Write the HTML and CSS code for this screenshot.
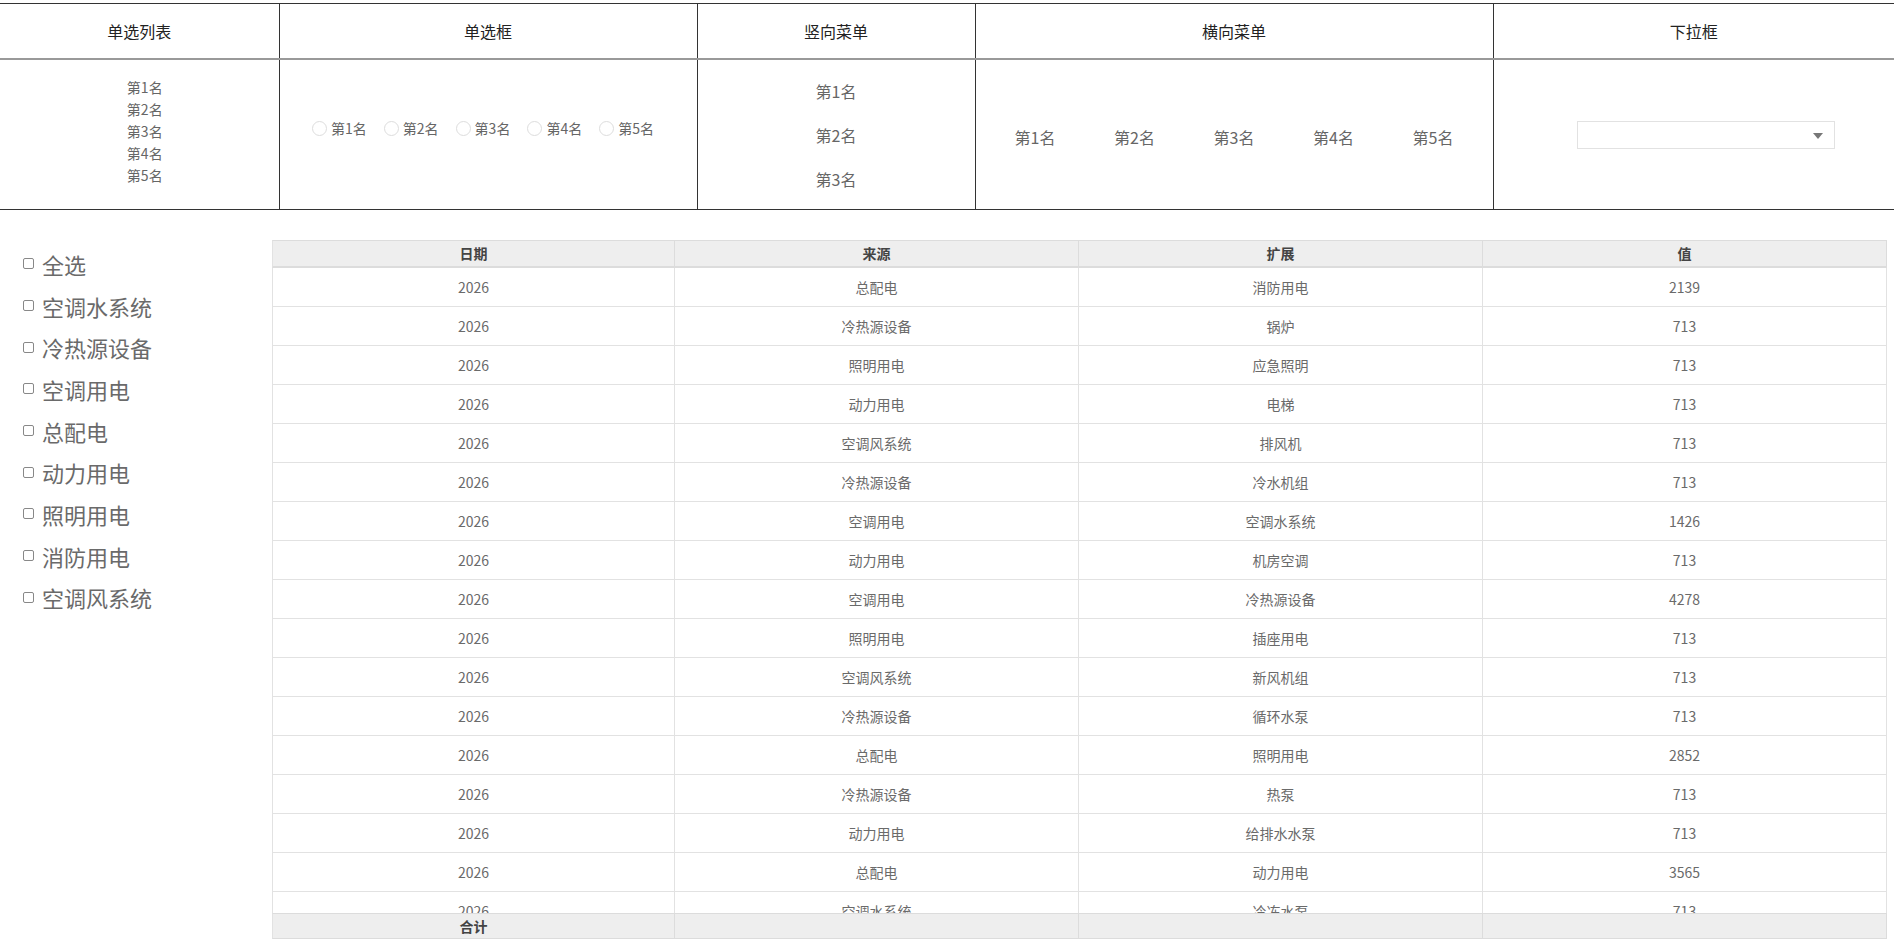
FILE: index.html
```html
<!DOCTYPE html>
<html lang="zh-CN">
<head>
<meta charset="utf-8">
<title>能耗报表</title>
<link rel="stylesheet" href="styles.css">
</head>
<body>
<table class="widgets">
  <colgroup>
    <col class="w-list"><col class="w-radio"><col class="w-vmenu"><col class="w-hmenu"><col>
  </colgroup>
  <thead>
    <tr><th>单选列表</th><th>单选框</th><th>竖向菜单</th><th>横向菜单</th><th>下拉框</th></tr>
  </thead>
  <tbody>
    <tr>
      <td>
        <ul class="pick-list">
          <li>第1名</li><li>第2名</li><li>第3名</li><li>第4名</li><li>第5名</li>
        </ul>
      </td>
      <td>
        <div class="radio-group">
          <label class="radio"><span class="radio-dot"></span>第1名</label>
          <label class="radio"><span class="radio-dot"></span>第2名</label>
          <label class="radio"><span class="radio-dot"></span>第3名</label>
          <label class="radio"><span class="radio-dot"></span>第4名</label>
          <label class="radio"><span class="radio-dot"></span>第5名</label>
        </div>
      </td>
      <td>
        <ul class="vmenu"><li>第1名</li><li>第2名</li><li>第3名</li></ul>
      </td>
      <td>
        <ul class="hmenu"><li>第1名</li><li>第2名</li><li>第3名</li><li>第4名</li><li>第5名</li></ul>
      </td>
      <td class="cell-select">
        <div class="select"><span class="select-caret"></span></div>
      </td>
    </tr>
  </tbody>
</table>

<div class="report">
  <ul class="filters">
    <li><span class="check"></span>全选</li>
    <li><span class="check"></span>空调水系统</li>
    <li><span class="check"></span>冷热源设备</li>
    <li><span class="check"></span>空调用电</li>
    <li><span class="check"></span>总配电</li>
    <li><span class="check"></span>动力用电</li>
    <li><span class="check"></span>照明用电</li>
    <li><span class="check"></span>消防用电</li>
    <li><span class="check"></span>空调风系统</li>
  </ul>

  <div class="grid">
    <table class="grid-head">
      <colgroup><col class="c1"><col class="c2"><col class="c3"><col class="c4"></colgroup>
      <tr><th>日期</th><th>来源</th><th>扩展</th><th>值</th></tr>
    </table>
    <div class="grid-body">
      <table>
        <colgroup><col class="c1"><col class="c2"><col class="c3"><col class="c4"></colgroup>
        <tr><td>2026</td><td>总配电</td><td>消防用电</td><td>2139</td></tr>
        <tr><td>2026</td><td>冷热源设备</td><td>锅炉</td><td>713</td></tr>
        <tr><td>2026</td><td>照明用电</td><td>应急照明</td><td>713</td></tr>
        <tr><td>2026</td><td>动力用电</td><td>电梯</td><td>713</td></tr>
        <tr><td>2026</td><td>空调风系统</td><td>排风机</td><td>713</td></tr>
        <tr><td>2026</td><td>冷热源设备</td><td>冷水机组</td><td>713</td></tr>
        <tr><td>2026</td><td>空调用电</td><td>空调水系统</td><td>1426</td></tr>
        <tr><td>2026</td><td>动力用电</td><td>机房空调</td><td>713</td></tr>
        <tr><td>2026</td><td>空调用电</td><td>冷热源设备</td><td>4278</td></tr>
        <tr><td>2026</td><td>照明用电</td><td>插座用电</td><td>713</td></tr>
        <tr><td>2026</td><td>空调风系统</td><td>新风机组</td><td>713</td></tr>
        <tr><td>2026</td><td>冷热源设备</td><td>循环水泵</td><td>713</td></tr>
        <tr><td>2026</td><td>总配电</td><td>照明用电</td><td>2852</td></tr>
        <tr><td>2026</td><td>冷热源设备</td><td>热泵</td><td>713</td></tr>
        <tr><td>2026</td><td>动力用电</td><td>给排水水泵</td><td>713</td></tr>
        <tr><td>2026</td><td>总配电</td><td>动力用电</td><td>3565</td></tr>
        <tr><td>2026</td><td>空调水系统</td><td>冷冻水泵</td><td>713</td></tr>
        <tr><td>2026</td><td>空调水系统</td><td>冷却水泵</td><td>713</td></tr>
        <tr><td>2026</td><td>空调水系统</td><td>冷却塔</td><td>713</td></tr>
        <tr><td>2026</td><td>空调风系统</td><td>空调机组</td><td>713</td></tr>
        <tr><td>2026</td><td>空调风系统</td><td>风机盘管</td><td>713</td></tr>
        <tr><td>2026</td><td>照明用电</td><td>室外照明</td><td>713</td></tr>
        <tr><td>2026</td><td>动力用电</td><td>生活水泵</td><td>713</td></tr>
        <tr><td>2026</td><td>总配电</td><td>空调用电</td><td>2852</td></tr>
        <tr><td>2026</td><td>冷热源设备</td><td>冷却泵</td><td>713</td></tr>
        <tr><td>2026</td><td>照明用电</td><td>公共照明</td><td>713</td></tr>
        <tr><td>2026</td><td>动力用电</td><td>送风机</td><td>713</td></tr>
        <tr><td>2026</td><td>消防用电</td><td>消防水泵</td><td>713</td></tr>
      </table>
    </div>
    <table class="grid-foot">
      <colgroup><col class="c1"><col class="c2"><col class="c3"><col class="c4"></colgroup>
      <tr><td>合计</td><td></td><td></td><td></td></tr>
    </table>
  </div>
</div>
</body>
</html>
```

FILE: styles.css
```css
html, body {
  margin: 0;
  padding: 0;
  background: #fff;
}

body {
  font-family: "Noto Sans CJK SC", "Noto Sans", sans-serif;
  color: #666;
}

ul {
  list-style: none;
  margin: 0;
  padding: 0;
}

/* ---------- widget showcase table ---------- */
.widgets {
  width: 100%;
  table-layout: fixed;
  border-collapse: collapse;
  margin-top: 3px;
  border-top: 1px solid #333;
  border-bottom: 1px solid #333;
}

.w-list { width: 279px; }
.w-radio { width: 418px; }
.w-vmenu { width: 278px; }
.w-hmenu { width: 518px; }

.widgets th,
.widgets td {
  padding: 0;
  text-align: center;
  vertical-align: middle;
  border-left: 1px solid #333;
}

.widgets th:first-child,
.widgets td:first-child {
  border-left: none;
}

.widgets th {
  height: 54px;
  font-size: 16px;
  font-weight: normal;
  color: #222;
  border-bottom: 2px solid #999;
}

.widgets td {
  height: 149px;
}

.pick-list {
  padding: 0 0 7px 11px;
  font-size: 14px;
  line-height: 22px;
  color: #666;
}

.radio-group {
  display: flex;
  justify-content: center;
  gap: 17px;
  padding: 0 10px 13px 0;
  font-size: 14px;
  color: #666;
}

.radio {
  display: flex;
  align-items: center;
}

.radio-dot {
  width: 13px;
  height: 13px;
  border: 1px solid #ddd;
  border-radius: 50%;
  margin-right: 4px;
}

.vmenu {
  font-size: 16px;
  color: #666;
}

.vmenu li {
  height: 44px;
  line-height: 44px;
}

.hmenu {
  display: flex;
  justify-content: center;
  padding-top: 5px;
  font-size: 16px;
  color: #666;
}

.hmenu li {
  width: 99.5px;
}

.cell-select {
  padding-left: 24px !important;
}

.select {
  position: relative;
  width: 256px;
  height: 26px;
  margin: 0 auto;
  border: 1px solid #e2e2e2;
  background: #fff;
}

.select-caret {
  position: absolute;
  right: 11px;
  top: 11px;
  width: 0;
  height: 0;
  border-left: 5px solid transparent;
  border-right: 5px solid transparent;
  border-top: 6px solid #777;
}

/* ---------- report area ---------- */
.report {
  display: flex;
  margin-top: 30px;
}

.filters {
  width: 249px;
  padding: 3px 0 0 23px;
}

.filters li {
  display: flex;
  align-items: center;
  height: 41.7px;
  font-size: 22px;
  color: #6a6a6a;
}

.check {
  width: 9px;
  height: 9px;
  border: 1px solid #888;
  border-radius: 2px;
  margin-right: 8px;
  flex: none;
}

.grid {
  width: 1620px;
}

.grid table {
  width: 1615px;
  table-layout: fixed;
  border-collapse: separate;
  border-spacing: 0;
}

.c1 { width: 403px; }
.c2 { width: 404px; }
.c3 { width: 404px; }
.c4 { width: 404px; }

.grid th,
.grid td {
  padding: 0;
  text-align: center;
  vertical-align: middle;
  font-size: 14px;
  border-right: 1px solid #e2e2e2;
}

.grid th:first-child,
.grid td:first-child {
  border-left: 1px solid #e2e2e2;
}

.grid-head th {
  line-height: 25px;
  font-weight: bold;
  color: #444;
  background: #eee;
  border-top: 1px solid #dcdcdc;
  border-bottom: 2px solid #dcdcdc;
  border-right-color: #dcdcdc;
}

.grid-body {
  height: 645px;
  overflow-y: scroll;
}

.grid-body td {
  line-height: 38px;
  color: #6a6a6a;
  border-bottom: 1px solid #e2e2e2;
}

.grid-body::-webkit-scrollbar {
  width: 5px;
}

.grid-body::-webkit-scrollbar-track {
  background: #fff;
}

.grid-body::-webkit-scrollbar-thumb {
  background: #bcdcf9;
}

.grid-foot td {
  line-height: 24px;
  font-weight: bold;
  color: #444;
  background: #eee;
  border-top: 1px solid #dcdcdc;
  border-bottom: 1px solid #dcdcdc;
  border-right-color: #dcdcdc;
}
```
